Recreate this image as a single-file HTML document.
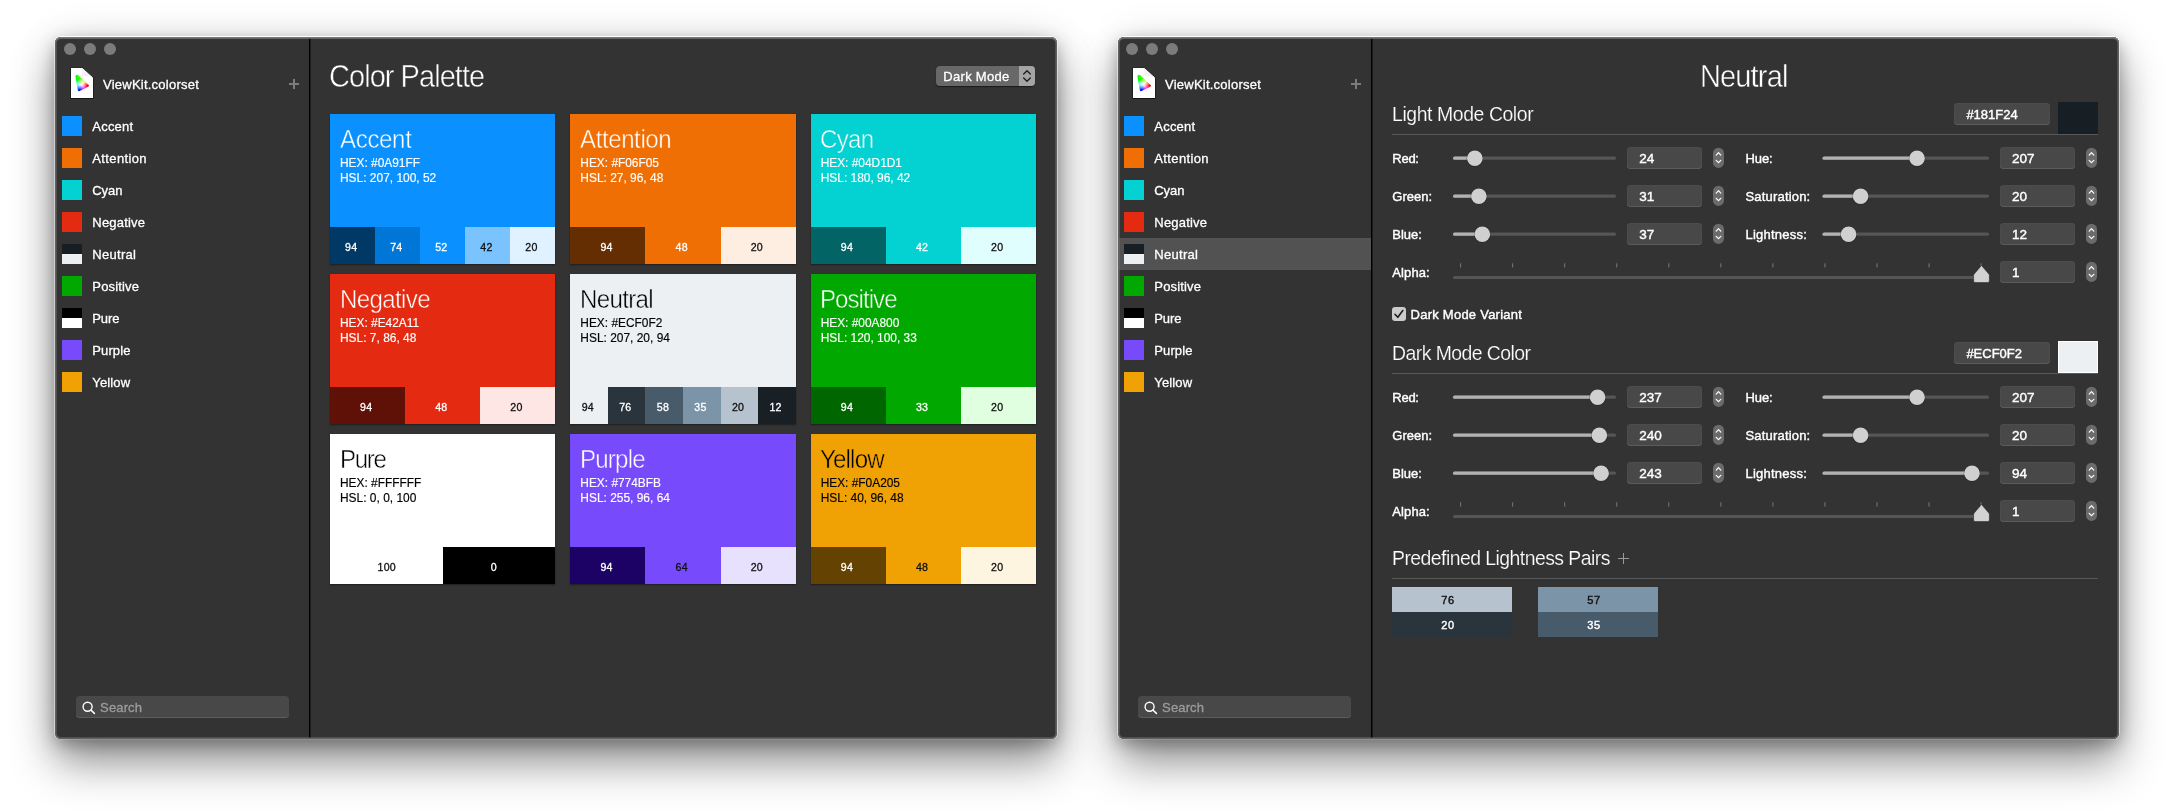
<!DOCTYPE html>
<html lang="en"><head><meta charset="utf-8"><title>ViewKit.colorset</title>
<style>
html,body{margin:0;padding:0}
body{width:2174px;height:812px;overflow:hidden;background:#fff;position:relative;font-family:"Liberation Sans",sans-serif;}
.win{position:absolute;top:37px;width:1002px;height:702px;border-radius:6px;background:#333333;
 box-shadow:0 -1px 0 0 rgba(255,255,255,.9),-1px 0 0 0 rgba(255,255,255,.45),1px 0 0 0 rgba(255,255,255,.45),0 1px 0 0 rgba(255,255,255,.13),0 24px 44px rgba(0,0,0,.42),0 5px 16px rgba(0,0,0,.26),0 0 40px rgba(0,0,0,.10);}
.clip{position:absolute;left:0;top:0;right:0;bottom:0;border-radius:6px;overflow:hidden}
.in{position:absolute;top:-37px;width:2174px;height:812px;will-change:transform}
.edge{position:absolute;left:0;top:0;right:0;bottom:0;border-radius:6px;box-shadow:inset 0 1px 0 #777,inset 0 2px 0 rgba(125,125,125,.45),inset 0 0 0 1px #606060,inset 0 0 0 2px rgba(110,110,110,.5);pointer-events:none}
.abs{position:absolute;overflow:visible}
.t{position:absolute;white-space:nowrap;line-height:1;font-size:13px;color:#fff}
.t.thin{-webkit-text-stroke:0.5px #333333;paint-order:fill stroke;}
.t.light2{-webkit-text-stroke:0.2px #333333;paint-order:fill stroke;}
.t{-webkit-text-stroke:0.3px currentColor}
.t.b{-webkit-text-stroke:0.4px currentColor}
.t.d{-webkit-text-stroke:0.15px currentColor}
.tl{position:absolute;width:12px;height:12px;border-radius:50%;background:#7b7b7b}
.search{position:absolute;background:#484848;border-radius:4px;box-shadow:inset 0 -1px 0 #5c5c5c}
.fld{position:absolute;background:#484848;border-radius:4px;box-shadow:inset 0 -1px 0 #5c5c5c, inset 0 0 0 .5px #505050}
.pop{position:absolute;background:#686868;border-radius:4px;overflow:hidden;box-shadow:0 .5px 1px rgba(0,0,0,.5)}
.popr{position:absolute;right:0;top:0;width:16px;height:20px;background:#a4a4a4}
.knob{position:absolute;width:15px;height:15px;border-radius:50%;background:#cfcfcf;box-shadow:0 0 0 .5px rgba(0,0,0,.45),0 1px 1px rgba(0,0,0,.35)}
.gam{position:absolute;left:74px;top:74px;width:16px;height:18px;
 background:radial-gradient(circle at 47% 57%,#fff 0,rgba(255,255,255,.85) 12%,rgba(255,255,255,0) 46%),conic-gradient(from 100deg at 47% 57%,#f00,#f0f 13%,#00f 27%,#0cf 40%,#0ff 47%,#0f0 60%,#5f0 72%,#ff0 84%,#f80 92%,#f00);
 clip-path:polygon(8.750% 13.900%,11.250% 7.200%,18.750% 4.400%,26.900% 7.200%,91.250% 61.100%,94.400% 65.600%,91.250% 70%,35% 94.400%,28.750% 95.600%,24.400% 91.700%);filter:blur(.3px)}
</style></head><body>
<svg width="0" height="0" style="position:absolute"><defs><filter id="fs" x="-20%" y="-20%" width="140%" height="140%"><feGaussianBlur stdDeviation="0.6"/></filter></defs></svg>
<div class="win" style="left:55px"><div class="clip"><div class="in" style="left:-55px">
<div class="tl" style="left:64px;top:43px"></div>
<div class="tl" style="left:84px;top:43px"></div>
<div class="tl" style="left:104px;top:43px"></div>
<svg class="abs" style="left:69px;top:66px" width="27" height="35" viewBox="69 66 27 35">
<path d="M70.500 67.500h12l11 10v21h-23z" fill="#000" opacity=".8" filter="url(#fs)" transform="translate(0,0.3)"/>
<path d="M71 68h11.2l10.8 9.8v20.2h-22z" fill="#fff"/>
<path d="M82.2 68c.6 3.5-.2 6.500-1.200 8.300 2.800-1.100 7.600-.500 12 1.500z" fill="#f3f3f3"/>
</svg>
<div class="gam"></div>
<span class="t" style="left:103.00px;top:78.00px;font-size:13px;color:#fff;letter-spacing:0.235px;">ViewKit.colorset</span>
<div style="position:absolute;left:289px;top:83px;width:10px;height:2px;background:#7c7c7c;"></div>
<div style="position:absolute;left:293px;top:79px;width:2px;height:10px;background:#7c7c7c;"></div>
<div style="position:absolute;left:62px;top:116px;width:20px;height:20px;background:#0A91FF;"></div>
<span class="t" style="left:92.30px;top:120.00px;font-size:13px;color:#fff;letter-spacing:0.210px;">Accent</span>
<div style="position:absolute;left:62px;top:148px;width:20px;height:20px;background:#F06F05;"></div>
<span class="t" style="left:92.30px;top:152.00px;font-size:13px;color:#fff;letter-spacing:0.365px;">Attention</span>
<div style="position:absolute;left:62px;top:180px;width:20px;height:20px;background:#04D1D1;"></div>
<span class="t" style="left:92.30px;top:184.00px;font-size:13px;color:#fff;letter-spacing:-0.087px;">Cyan</span>
<div style="position:absolute;left:62px;top:212px;width:20px;height:20px;background:#E42A11;"></div>
<span class="t" style="left:92.30px;top:216.00px;font-size:13px;color:#fff;letter-spacing:0.199px;">Negative</span>
<div style="position:absolute;left:62px;top:244px;width:20px;height:10px;background:#181F24;"></div>
<div style="position:absolute;left:62px;top:254px;width:20px;height:10px;background:#ECF0F2;"></div>
<span class="t" style="left:92.30px;top:248.00px;font-size:13px;color:#fff;letter-spacing:0.285px;">Neutral</span>
<div style="position:absolute;left:62px;top:276px;width:20px;height:20px;background:#00A800;"></div>
<span class="t" style="left:92.30px;top:280.00px;font-size:13px;color:#fff;letter-spacing:0.160px;">Positive</span>
<div style="position:absolute;left:62px;top:308px;width:20px;height:10px;background:#000000;"></div>
<div style="position:absolute;left:62px;top:318px;width:20px;height:10px;background:#FFFFFF;"></div>
<span class="t" style="left:92.30px;top:312.00px;font-size:13px;color:#fff;letter-spacing:-0.115px;">Pure</span>
<div style="position:absolute;left:62px;top:340px;width:20px;height:20px;background:#774BFB;"></div>
<span class="t" style="left:92.30px;top:344.00px;font-size:13px;color:#fff;letter-spacing:0.104px;">Purple</span>
<div style="position:absolute;left:62px;top:372px;width:20px;height:20px;background:#F0A205;"></div>
<span class="t" style="left:92.30px;top:376.00px;font-size:13px;color:#fff;letter-spacing:0.133px;">Yellow</span>
<div class="search" style="left:76px;top:696px;width:213px;height:22px"></div>
<svg class="abs" style="left:80px;top:699px" width="17" height="17" viewBox="80 699 17 17"><circle cx="87.6" cy="706.7" r="4.5" fill="none" stroke="#fff" stroke-width="1.4"/><path d="M90.900 710l3.500 3.400" stroke="#fff" stroke-width="1.5" stroke-linecap="round"/></svg>
<span class="t" style="left:100.10px;top:701.00px;font-size:13px;color:#9c9c9c;letter-spacing:0.135px;">Search</span>
<div style="position:absolute;left:309px;top:38px;width:1px;height:700px;background:#000;"></div>
<div style="position:absolute;left:310px;top:38px;width:1px;height:700px;background:rgba(0,0,0,.45);"></div>
<span class="t thin" style="left:329.00px;top:60.00px;font-size:32px;color:#fff;letter-spacing:-1.038px;transform:scaleX(0.9050);transform-origin:0 0;">Color Palette</span>
<div class="pop" style="left:936px;top:66px;width:99px;height:20px"><div class="popr"></div></div>
<svg class="abs" style="left:1019px;top:66px" width="16" height="20" viewBox="0 0 16 20"><path d="M4.700 8l3.300-3.300 3.300 3.300M4.700 12l3.300 3.300 3.300-3.300" fill="none" stroke="#1e1e1e" stroke-width="1.4" stroke-linecap="round" stroke-linejoin="round"/></svg>
<span class="t" style="left:943.30px;top:70.00px;font-size:13px;color:#fff;letter-spacing:0.302px;">Dark Mode</span>
<div style="position:absolute;left:330px;top:114px;width:225.33px;height:150px;background:#0A91FF;box-shadow:0 1px 1.5px rgba(0,0,0,.45);"></div>
<div style="position:absolute;left:330px;top:226.5px;width:45.086px;height:37.5px;background:#003866;"></div>
<span class="t" style="left:345.10px;top:242.00px;font-size:10.6px;color:#fff;letter-spacing:0.236px;">94</span>
<div style="position:absolute;left:375.066px;top:226.5px;width:45.086px;height:37.5px;background:#0076d6;"></div>
<span class="t" style="left:390.17px;top:242.00px;font-size:10.6px;color:#fff;letter-spacing:0.236px;">74</span>
<div style="position:absolute;left:420.132px;top:226.5px;width:45.086px;height:37.5px;background:#0A91FF;"></div>
<span class="t" style="left:435.23px;top:242.00px;font-size:10.6px;color:#fff;letter-spacing:0.236px;">52</span>
<div style="position:absolute;left:465.198px;top:226.5px;width:45.086px;height:37.5px;background:#7ac3ff;"></div>
<span class="t" style="left:480.30px;top:242.00px;font-size:10.6px;color:#111;letter-spacing:0.236px;">42</span>
<div style="position:absolute;left:510.264px;top:226.5px;width:45.086px;height:37.5px;background:#e0f1ff;"></div>
<span class="t" style="left:525.37px;top:242.00px;font-size:10.6px;color:#111;letter-spacing:0.236px;">20</span>
<span class="t light" style="left:339.60px;top:126.00px;font-size:26.2px;color:#fff;letter-spacing:-0.397px;-webkit-text-stroke:0.5px #0A91FF;paint-order:fill stroke;transform:scaleX(0.9200);transform-origin:0 0;">Accent</span>
<span class="t d" style="left:340.00px;top:158.00px;font-size:11.9px;color:#fff;">HEX: #0A91FF</span>
<span class="t d" style="left:340.00px;top:173.00px;font-size:11.95px;color:#fff;">HSL: 207, 100, 52</span>
<div style="position:absolute;left:570.33px;top:114px;width:225.33px;height:150px;background:#F06F05;box-shadow:0 1px 1.5px rgba(0,0,0,.45);"></div>
<div style="position:absolute;left:570.33px;top:226.5px;width:75.13px;height:37.5px;background:#642e02;"></div>
<span class="t" style="left:600.45px;top:242.00px;font-size:10.6px;color:#fff;letter-spacing:0.236px;">94</span>
<div style="position:absolute;left:645.44px;top:226.5px;width:75.13px;height:37.5px;background:#F06F05;"></div>
<span class="t" style="left:675.56px;top:242.00px;font-size:10.6px;color:#fff;letter-spacing:0.236px;">48</span>
<div style="position:absolute;left:720.55px;top:226.5px;width:75.13px;height:37.5px;background:#feeee1;"></div>
<span class="t" style="left:750.67px;top:242.00px;font-size:10.6px;color:#111;letter-spacing:0.236px;">20</span>
<span class="t light" style="left:579.93px;top:126.00px;font-size:26.2px;color:#fff;letter-spacing:-0.464px;-webkit-text-stroke:0.5px #F06F05;paint-order:fill stroke;transform:scaleX(0.9200);transform-origin:0 0;">Attention</span>
<span class="t d" style="left:580.33px;top:158.00px;font-size:11.9px;color:#fff;">HEX: #F06F05</span>
<span class="t d" style="left:580.33px;top:173.00px;font-size:11.95px;color:#fff;">HSL: 27, 96, 48</span>
<div style="position:absolute;left:810.67px;top:114px;width:225.33px;height:150px;background:#04D1D1;box-shadow:0 1px 1.5px rgba(0,0,0,.45);"></div>
<div style="position:absolute;left:810.67px;top:226.5px;width:75.13px;height:37.5px;background:#026464;"></div>
<span class="t" style="left:840.79px;top:242.00px;font-size:10.6px;color:#fff;letter-spacing:0.236px;">94</span>
<div style="position:absolute;left:885.78px;top:226.5px;width:75.13px;height:37.5px;background:#04D1D1;"></div>
<span class="t" style="left:915.90px;top:242.00px;font-size:10.6px;color:#fff;letter-spacing:0.236px;">42</span>
<div style="position:absolute;left:960.89px;top:226.5px;width:75.13px;height:37.5px;background:#e1fefe;"></div>
<span class="t" style="left:991.01px;top:242.00px;font-size:10.6px;color:#111;letter-spacing:0.236px;">20</span>
<span class="t light" style="left:820.27px;top:126.00px;font-size:26.2px;color:#fff;letter-spacing:-0.780px;-webkit-text-stroke:0.5px #04D1D1;paint-order:fill stroke;transform:scaleX(0.9200);transform-origin:0 0;">Cyan</span>
<span class="t d" style="left:820.67px;top:158.00px;font-size:11.9px;color:#fff;">HEX: #04D1D1</span>
<span class="t d" style="left:820.67px;top:173.00px;font-size:11.95px;color:#fff;">HSL: 180, 96, 42</span>
<div style="position:absolute;left:330px;top:274px;width:225.33px;height:150px;background:#E42A11;box-shadow:0 1px 1.5px rgba(0,0,0,.45);"></div>
<div style="position:absolute;left:330px;top:386.5px;width:75.13px;height:37.5px;background:#5f1107;"></div>
<span class="t" style="left:360.12px;top:402.00px;font-size:10.6px;color:#fff;letter-spacing:0.236px;">94</span>
<div style="position:absolute;left:405.11px;top:386.5px;width:75.13px;height:37.5px;background:#E42A11;"></div>
<span class="t" style="left:435.23px;top:402.00px;font-size:10.6px;color:#fff;letter-spacing:0.236px;">48</span>
<div style="position:absolute;left:480.22px;top:386.5px;width:75.13px;height:37.5px;background:#fde6e3;"></div>
<span class="t" style="left:510.34px;top:402.00px;font-size:10.6px;color:#111;letter-spacing:0.236px;">20</span>
<span class="t light" style="left:339.60px;top:286.00px;font-size:26.2px;color:#fff;letter-spacing:-0.697px;-webkit-text-stroke:0.5px #E42A11;paint-order:fill stroke;transform:scaleX(0.9200);transform-origin:0 0;">Negative</span>
<span class="t d" style="left:340.00px;top:318.00px;font-size:11.9px;color:#fff;">HEX: #E42A11</span>
<span class="t d" style="left:340.00px;top:333.00px;font-size:11.95px;color:#fff;">HSL: 7, 86, 48</span>
<div style="position:absolute;left:570.33px;top:274px;width:225.33px;height:150px;background:#ECF0F2;box-shadow:0 1px 1.5px rgba(0,0,0,.45);"></div>
<div style="position:absolute;left:570.33px;top:386.5px;width:37.575px;height:37.5px;background:#ECF0F2;"></div>
<span class="t" style="left:581.68px;top:402.00px;font-size:10.6px;color:#111;letter-spacing:0.236px;">94</span>
<div style="position:absolute;left:607.885px;top:386.5px;width:37.575px;height:37.5px;background:#29343d;"></div>
<span class="t" style="left:619.23px;top:402.00px;font-size:10.6px;color:#fff;letter-spacing:0.236px;">76</span>
<div style="position:absolute;left:645.44px;top:386.5px;width:37.575px;height:37.5px;background:#475b6b;"></div>
<span class="t" style="left:656.79px;top:402.00px;font-size:10.6px;color:#fff;letter-spacing:0.236px;">58</span>
<div style="position:absolute;left:682.995px;top:386.5px;width:37.575px;height:37.5px;background:#7b94a7;"></div>
<span class="t" style="left:694.34px;top:402.00px;font-size:10.6px;color:#fff;letter-spacing:0.236px;">35</span>
<div style="position:absolute;left:720.55px;top:386.5px;width:37.575px;height:37.5px;background:#b6c3ce;"></div>
<span class="t" style="left:731.90px;top:402.00px;font-size:10.6px;color:#111;letter-spacing:0.236px;">20</span>
<div style="position:absolute;left:758.105px;top:386.5px;width:37.575px;height:37.5px;background:#181f25;"></div>
<span class="t" style="left:769.45px;top:402.00px;font-size:10.6px;color:#fff;letter-spacing:0.236px;">12</span>
<span class="t light" style="left:579.93px;top:286.00px;font-size:26.2px;color:#000;letter-spacing:-0.746px;-webkit-text-stroke:0.5px #ECF0F2;paint-order:fill stroke;transform:scaleX(0.9200);transform-origin:0 0;">Neutral</span>
<span class="t d" style="left:580.33px;top:318.00px;font-size:11.9px;color:#000;">HEX: #ECF0F2</span>
<span class="t d" style="left:580.33px;top:333.00px;font-size:11.95px;color:#000;">HSL: 207, 20, 94</span>
<div style="position:absolute;left:810.67px;top:274px;width:225.33px;height:150px;background:#00A800;box-shadow:0 1px 1.5px rgba(0,0,0,.45);"></div>
<div style="position:absolute;left:810.67px;top:386.5px;width:75.13px;height:37.5px;background:#006600;"></div>
<span class="t" style="left:840.79px;top:402.00px;font-size:10.6px;color:#fff;letter-spacing:0.236px;">94</span>
<div style="position:absolute;left:885.78px;top:386.5px;width:75.13px;height:37.5px;background:#00A800;"></div>
<span class="t" style="left:915.90px;top:402.00px;font-size:10.6px;color:#fff;letter-spacing:0.236px;">33</span>
<div style="position:absolute;left:960.89px;top:386.5px;width:75.13px;height:37.5px;background:#e0ffe0;"></div>
<span class="t" style="left:991.01px;top:402.00px;font-size:10.6px;color:#111;letter-spacing:0.236px;">20</span>
<span class="t light" style="left:820.27px;top:286.00px;font-size:26.2px;color:#fff;letter-spacing:-1.060px;-webkit-text-stroke:0.5px #00A800;paint-order:fill stroke;transform:scaleX(0.9200);transform-origin:0 0;">Positive</span>
<span class="t d" style="left:820.67px;top:318.00px;font-size:11.9px;color:#fff;">HEX: #00A800</span>
<span class="t d" style="left:820.67px;top:333.00px;font-size:11.95px;color:#fff;">HSL: 120, 100, 33</span>
<div style="position:absolute;left:330px;top:434px;width:225.33px;height:150px;background:#FFFFFF;box-shadow:0 1px 1.5px rgba(0,0,0,.45);"></div>
<div style="position:absolute;left:330px;top:546.5px;width:112.685px;height:37.5px;background:#fff;"></div>
<span class="t" style="left:377.54px;top:562.00px;font-size:10.6px;color:#111;letter-spacing:0.236px;">100</span>
<div style="position:absolute;left:442.665px;top:546.5px;width:112.685px;height:37.5px;background:#000;"></div>
<span class="t" style="left:490.63px;top:562.00px;font-size:10.6px;color:#fff;letter-spacing:0.236px;">0</span>
<span class="t light" style="left:339.60px;top:446.00px;font-size:26.2px;color:#000;letter-spacing:-1.417px;-webkit-text-stroke:0.5px #FFFFFF;paint-order:fill stroke;transform:scaleX(0.9200);transform-origin:0 0;">Pure</span>
<span class="t d" style="left:340.00px;top:478.00px;font-size:11.9px;color:#000;">HEX: #FFFFFF</span>
<span class="t d" style="left:340.00px;top:493.00px;font-size:11.95px;color:#000;">HSL: 0, 0, 100</span>
<div style="position:absolute;left:570.33px;top:434px;width:225.33px;height:150px;background:#774BFB;box-shadow:0 1px 1.5px rgba(0,0,0,.45);"></div>
<div style="position:absolute;left:570.33px;top:546.5px;width:75.13px;height:37.5px;background:#1b0264;"></div>
<span class="t" style="left:600.45px;top:562.00px;font-size:10.6px;color:#fff;letter-spacing:0.236px;">94</span>
<div style="position:absolute;left:645.44px;top:546.5px;width:75.13px;height:37.5px;background:#774BFB;"></div>
<span class="t" style="left:675.56px;top:562.00px;font-size:10.6px;color:#111;letter-spacing:0.236px;">64</span>
<div style="position:absolute;left:720.55px;top:546.5px;width:75.13px;height:37.5px;background:#e8e1fe;"></div>
<span class="t" style="left:750.67px;top:562.00px;font-size:10.6px;color:#111;letter-spacing:0.236px;">20</span>
<span class="t light" style="left:579.93px;top:446.00px;font-size:26.2px;color:#fff;letter-spacing:-0.883px;-webkit-text-stroke:0.5px #774BFB;paint-order:fill stroke;transform:scaleX(0.9200);transform-origin:0 0;">Purple</span>
<span class="t d" style="left:580.33px;top:478.00px;font-size:11.9px;color:#fff;">HEX: #774BFB</span>
<span class="t d" style="left:580.33px;top:493.00px;font-size:11.95px;color:#fff;">HSL: 255, 96, 64</span>
<div style="position:absolute;left:810.67px;top:434px;width:225.33px;height:150px;background:#F0A205;box-shadow:0 1px 1.5px rgba(0,0,0,.45);"></div>
<div style="position:absolute;left:810.67px;top:546.5px;width:75.13px;height:37.5px;background:#644302;"></div>
<span class="t" style="left:840.79px;top:562.00px;font-size:10.6px;color:#fff;letter-spacing:0.236px;">94</span>
<div style="position:absolute;left:885.78px;top:546.5px;width:75.13px;height:37.5px;background:#F0A205;"></div>
<span class="t" style="left:915.90px;top:562.00px;font-size:10.6px;color:#111;letter-spacing:0.236px;">48</span>
<div style="position:absolute;left:960.89px;top:546.5px;width:75.13px;height:37.5px;background:#fef5e1;"></div>
<span class="t" style="left:991.01px;top:562.00px;font-size:10.6px;color:#111;letter-spacing:0.236px;">20</span>
<span class="t light" style="left:820.27px;top:446.00px;font-size:26.2px;color:#000;letter-spacing:-0.905px;-webkit-text-stroke:0.5px #F0A205;paint-order:fill stroke;transform:scaleX(0.9200);transform-origin:0 0;">Yellow</span>
<span class="t d" style="left:820.67px;top:478.00px;font-size:11.9px;color:#000;">HEX: #F0A205</span>
<span class="t d" style="left:820.67px;top:493.00px;font-size:11.95px;color:#000;">HSL: 40, 96, 48</span>
</div></div><div class="edge"></div></div>
<div class="win" style="left:1118px;width:1001px"><div class="clip">
<div class="in" style="left:-56px">
<div class="tl" style="left:64px;top:43px"></div>
<div class="tl" style="left:84px;top:43px"></div>
<div class="tl" style="left:104px;top:43px"></div>
<svg class="abs" style="left:69px;top:66px" width="27" height="35" viewBox="69 66 27 35">
<path d="M70.500 67.500h12l11 10v21h-23z" fill="#000" opacity=".8" filter="url(#fs)" transform="translate(0,0.3)"/>
<path d="M71 68h11.2l10.8 9.8v20.2h-22z" fill="#fff"/>
<path d="M82.2 68c.6 3.5-.2 6.500-1.200 8.300 2.800-1.100 7.600-.500 12 1.500z" fill="#f3f3f3"/>
</svg>
<div class="gam"></div>
<span class="t" style="left:103.00px;top:78.00px;font-size:13px;color:#fff;letter-spacing:0.235px;">ViewKit.colorset</span>
<div style="position:absolute;left:289px;top:83px;width:10px;height:2px;background:#7c7c7c;"></div>
<div style="position:absolute;left:293px;top:79px;width:2px;height:10px;background:#7c7c7c;"></div>
<div style="position:absolute;left:62px;top:116px;width:20px;height:20px;background:#0A91FF;"></div>
<span class="t" style="left:92.30px;top:120.00px;font-size:13px;color:#fff;letter-spacing:0.210px;">Accent</span>
<div style="position:absolute;left:62px;top:148px;width:20px;height:20px;background:#F06F05;"></div>
<span class="t" style="left:92.30px;top:152.00px;font-size:13px;color:#fff;letter-spacing:0.365px;">Attention</span>
<div style="position:absolute;left:62px;top:180px;width:20px;height:20px;background:#04D1D1;"></div>
<span class="t" style="left:92.30px;top:184.00px;font-size:13px;color:#fff;letter-spacing:-0.087px;">Cyan</span>
<div style="position:absolute;left:62px;top:212px;width:20px;height:20px;background:#E42A11;"></div>
<span class="t" style="left:92.30px;top:216.00px;font-size:13px;color:#fff;letter-spacing:0.199px;">Negative</span>
<div style="position:absolute;left:56px;top:238px;width:253px;height:32px;background:#525252;"></div>
<div style="position:absolute;left:62px;top:244px;width:20px;height:10px;background:#181F24;"></div>
<div style="position:absolute;left:62px;top:254px;width:20px;height:10px;background:#ECF0F2;"></div>
<span class="t" style="left:92.30px;top:248.00px;font-size:13px;color:#fff;letter-spacing:0.285px;">Neutral</span>
<div style="position:absolute;left:62px;top:276px;width:20px;height:20px;background:#00A800;"></div>
<span class="t" style="left:92.30px;top:280.00px;font-size:13px;color:#fff;letter-spacing:0.160px;">Positive</span>
<div style="position:absolute;left:62px;top:308px;width:20px;height:10px;background:#000000;"></div>
<div style="position:absolute;left:62px;top:318px;width:20px;height:10px;background:#FFFFFF;"></div>
<span class="t" style="left:92.30px;top:312.00px;font-size:13px;color:#fff;letter-spacing:-0.115px;">Pure</span>
<div style="position:absolute;left:62px;top:340px;width:20px;height:20px;background:#774BFB;"></div>
<span class="t" style="left:92.30px;top:344.00px;font-size:13px;color:#fff;letter-spacing:0.104px;">Purple</span>
<div style="position:absolute;left:62px;top:372px;width:20px;height:20px;background:#F0A205;"></div>
<span class="t" style="left:92.30px;top:376.00px;font-size:13px;color:#fff;letter-spacing:0.133px;">Yellow</span>
<div class="search" style="left:76px;top:696px;width:213px;height:22px"></div>
<svg class="abs" style="left:80px;top:699px" width="17" height="17" viewBox="80 699 17 17"><circle cx="87.6" cy="706.7" r="4.5" fill="none" stroke="#fff" stroke-width="1.4"/><path d="M90.900 710l3.500 3.400" stroke="#fff" stroke-width="1.5" stroke-linecap="round"/></svg>
<span class="t" style="left:100.10px;top:701.00px;font-size:13px;color:#9c9c9c;letter-spacing:0.135px;">Search</span>
<div style="position:absolute;left:309px;top:38px;width:1px;height:700px;background:#000;"></div>
<div style="position:absolute;left:310px;top:38px;width:1px;height:700px;background:rgba(0,0,0,.45);"></div>
</div>
<div class="in" style="left:-1118px">
<span class="t thin" style="left:1700.00px;top:60.00px;font-size:32px;color:#fff;letter-spacing:-0.925px;transform:scaleX(0.9050);transform-origin:0 0;">Neutral</span>
<span class="t light2" style="left:1391.90px;top:103.00px;font-size:21px;color:#fff;letter-spacing:-0.455px;transform:scaleX(0.9250);transform-origin:0 0;">Light Mode Color</span>
<div style="position:absolute;left:1392px;top:134px;width:706px;height:1px;background:#595959;"></div>
<div class="fld" style="left:1954px;top:103px;width:96px;height:22px"></div>
<span class="t b" style="left:1966.40px;top:108.00px;font-size:13px;color:#fff;">#181F24</span>
<div style="position:absolute;left:2058px;top:102px;width:40px;height:32px;background:#181F24;"></div>
<span class="t b" style="left:1392.30px;top:152.00px;font-size:13px;color:#fff;letter-spacing:-0.265px;">Red:</span>
<svg class="abs" style="left:1449px;top:146px" width="173" height="26" viewBox="1449 146 173 26"><rect x="1453.00" y="156.60" width="163.00" height="3.2" rx="1.6" fill="#565656"/><rect x="1453.00" y="156.60" width="21.84" height="3.2" rx="1.6" fill="#b2b2b2"/><circle cx="1474.84" cy="158.50" r="8.3" fill="#1f1f1f" opacity=".55"/><circle cx="1474.84" cy="158.20" r="7.8" fill="#d0d0d0"/></svg>
<div class="fld" style="left:1627px;top:147px;width:75px;height:22px"></div><span class="t b" style="left:1639.30px;top:152.00px;font-size:13.5px;color:#fff;">24</span>
<svg class="abs" style="left:1713px;top:147px" width="11" height="21" viewBox="0 0 11 21"><rect x="0" y="0.7" width="11" height="20.2" rx="5.5" fill="#6b6b6b"/><path d="M3.200 8.100l2.300-2.400 2.300 2.400M3.200 13.300l2.300 2.400 2.300-2.400" fill="none" stroke="#fff" stroke-width="1.2" stroke-linecap="round" stroke-linejoin="round"/></svg>
<span class="t b" style="left:1745.50px;top:152.00px;font-size:13px;color:#fff;letter-spacing:-0.090px;">Hue:</span>
<svg class="abs" style="left:1818px;top:146px" width="176" height="26" viewBox="1818 146 176 26"><rect x="1822.50" y="156.60" width="166.50" height="3.2" rx="1.6" fill="#565656"/><rect x="1822.50" y="156.60" width="94.54" height="3.2" rx="1.6" fill="#b2b2b2"/><circle cx="1917.04" cy="158.50" r="8.3" fill="#1f1f1f" opacity=".55"/><circle cx="1917.04" cy="158.20" r="7.8" fill="#d0d0d0"/></svg>
<div class="fld" style="left:2000px;top:147px;width:75px;height:22px"></div><span class="t b" style="left:2012.00px;top:152.00px;font-size:13.5px;color:#fff;">207</span>
<svg class="abs" style="left:2086px;top:147px" width="11" height="21" viewBox="0 0 11 21"><rect x="0" y="0.7" width="11" height="20.2" rx="5.5" fill="#6b6b6b"/><path d="M3.200 8.100l2.300-2.400 2.300 2.400M3.200 13.300l2.300 2.400 2.300-2.400" fill="none" stroke="#fff" stroke-width="1.2" stroke-linecap="round" stroke-linejoin="round"/></svg>
<span class="t b" style="left:1392.30px;top:190.00px;font-size:13px;color:#fff;letter-spacing:-0.007px;">Green:</span>
<svg class="abs" style="left:1449px;top:184px" width="173" height="26" viewBox="1449 184 173 26"><rect x="1453.00" y="194.60" width="163.00" height="3.2" rx="1.6" fill="#565656"/><rect x="1453.00" y="194.60" width="25.87" height="3.2" rx="1.6" fill="#b2b2b2"/><circle cx="1478.87" cy="196.50" r="8.3" fill="#1f1f1f" opacity=".55"/><circle cx="1478.87" cy="196.20" r="7.8" fill="#d0d0d0"/></svg>
<div class="fld" style="left:1627px;top:185px;width:75px;height:22px"></div><span class="t b" style="left:1639.30px;top:190.00px;font-size:13.5px;color:#fff;">31</span>
<svg class="abs" style="left:1713px;top:185px" width="11" height="21" viewBox="0 0 11 21"><rect x="0" y="0.7" width="11" height="20.2" rx="5.5" fill="#6b6b6b"/><path d="M3.200 8.100l2.300-2.400 2.300 2.400M3.200 13.300l2.300 2.400 2.300-2.400" fill="none" stroke="#fff" stroke-width="1.2" stroke-linecap="round" stroke-linejoin="round"/></svg>
<span class="t b" style="left:1745.50px;top:190.00px;font-size:13px;color:#fff;letter-spacing:0.184px;">Saturation:</span>
<svg class="abs" style="left:1818px;top:184px" width="176" height="26" viewBox="1818 184 176 26"><rect x="1822.50" y="194.60" width="166.50" height="3.2" rx="1.6" fill="#565656"/><rect x="1822.50" y="194.60" width="38.10" height="3.2" rx="1.6" fill="#b2b2b2"/><circle cx="1860.60" cy="196.50" r="8.3" fill="#1f1f1f" opacity=".55"/><circle cx="1860.60" cy="196.20" r="7.8" fill="#d0d0d0"/></svg>
<div class="fld" style="left:2000px;top:185px;width:75px;height:22px"></div><span class="t b" style="left:2012.00px;top:190.00px;font-size:13.5px;color:#fff;">20</span>
<svg class="abs" style="left:2086px;top:185px" width="11" height="21" viewBox="0 0 11 21"><rect x="0" y="0.7" width="11" height="20.2" rx="5.5" fill="#6b6b6b"/><path d="M3.200 8.100l2.300-2.400 2.300 2.400M3.200 13.300l2.300 2.400 2.300-2.400" fill="none" stroke="#fff" stroke-width="1.2" stroke-linecap="round" stroke-linejoin="round"/></svg>
<span class="t b" style="left:1392.30px;top:228.00px;font-size:13px;color:#fff;letter-spacing:-0.006px;">Blue:</span>
<svg class="abs" style="left:1449px;top:222px" width="173" height="26" viewBox="1449 222 173 26"><rect x="1453.00" y="232.60" width="163.00" height="3.2" rx="1.6" fill="#565656"/><rect x="1453.00" y="232.60" width="29.33" height="3.2" rx="1.6" fill="#b2b2b2"/><circle cx="1482.33" cy="234.50" r="8.3" fill="#1f1f1f" opacity=".55"/><circle cx="1482.33" cy="234.20" r="7.8" fill="#d0d0d0"/></svg>
<div class="fld" style="left:1627px;top:223px;width:75px;height:22px"></div><span class="t b" style="left:1639.30px;top:228.00px;font-size:13.5px;color:#fff;">37</span>
<svg class="abs" style="left:1713px;top:223px" width="11" height="21" viewBox="0 0 11 21"><rect x="0" y="0.7" width="11" height="20.2" rx="5.5" fill="#6b6b6b"/><path d="M3.200 8.100l2.300-2.400 2.300 2.400M3.200 13.300l2.300 2.400 2.300-2.400" fill="none" stroke="#fff" stroke-width="1.2" stroke-linecap="round" stroke-linejoin="round"/></svg>
<span class="t b" style="left:1745.50px;top:228.00px;font-size:13px;color:#fff;letter-spacing:0.234px;">Lightness:</span>
<svg class="abs" style="left:1818px;top:222px" width="176" height="26" viewBox="1818 222 176 26"><rect x="1822.50" y="232.60" width="166.50" height="3.2" rx="1.6" fill="#565656"/><rect x="1822.50" y="232.60" width="26.06" height="3.2" rx="1.6" fill="#b2b2b2"/><circle cx="1848.56" cy="234.50" r="8.3" fill="#1f1f1f" opacity=".55"/><circle cx="1848.56" cy="234.20" r="7.8" fill="#d0d0d0"/></svg>
<div class="fld" style="left:2000px;top:223px;width:75px;height:22px"></div><span class="t b" style="left:2012.00px;top:228.00px;font-size:13.5px;color:#fff;">12</span>
<svg class="abs" style="left:2086px;top:223px" width="11" height="21" viewBox="0 0 11 21"><rect x="0" y="0.7" width="11" height="20.2" rx="5.5" fill="#6b6b6b"/><path d="M3.200 8.100l2.300-2.400 2.300 2.400M3.200 13.300l2.300 2.400 2.300-2.400" fill="none" stroke="#fff" stroke-width="1.2" stroke-linecap="round" stroke-linejoin="round"/></svg>
<span class="t b" style="left:1392.30px;top:266.00px;font-size:13px;color:#fff;letter-spacing:0.106px;">Alpha:</span>
<div style="position:absolute;left:1453px;top:276.2px;width:536px;height:3px;background:#555;border-radius:1.5px;"></div>
<svg class="abs" style="left:0;top:0" width="2174" height="812" viewBox="0 0 2174 812"><rect x="1460.10" y="263.30" width="1" height="4.2" fill="#7a7a7a"/><rect x="1512.15" y="263.30" width="1" height="4.2" fill="#7a7a7a"/><rect x="1564.20" y="263.30" width="1" height="4.2" fill="#7a7a7a"/><rect x="1616.25" y="263.30" width="1" height="4.2" fill="#7a7a7a"/><rect x="1668.30" y="263.30" width="1" height="4.2" fill="#7a7a7a"/><rect x="1720.35" y="263.30" width="1" height="4.2" fill="#7a7a7a"/><rect x="1772.40" y="263.30" width="1" height="4.2" fill="#7a7a7a"/><rect x="1824.45" y="263.30" width="1" height="4.2" fill="#7a7a7a"/><rect x="1876.50" y="263.30" width="1" height="4.2" fill="#7a7a7a"/><rect x="1928.55" y="263.30" width="1" height="4.2" fill="#7a7a7a"/><rect x="1980.60" y="263.30" width="1" height="4.2" fill="#7a7a7a"/></svg>
<svg class="abs" style="left:1972px;top:264px" width="19" height="20" viewBox="1972 264 19 20"><path d="M1981.500 265.400l7.300 8.600q.6.700.6 1.600v5.400q0 1.600-1.600 1.600h-12.600q-1.600 0-1.600-1.600v-5.400q0-.900.6-1.600z" fill="#d2d2d2" stroke="#2a2a2a" stroke-width=".6"/></svg>
<div class="fld" style="left:2000px;top:261px;width:75px;height:22px"></div><span class="t b" style="left:2012.00px;top:266.00px;font-size:13.5px;color:#fff;">1</span>
<svg class="abs" style="left:2086px;top:261px" width="11" height="21" viewBox="0 0 11 21"><rect x="0" y="0.7" width="11" height="20.2" rx="5.5" fill="#6b6b6b"/><path d="M3.200 8.100l2.300-2.400 2.300 2.400M3.200 13.300l2.300 2.400 2.300-2.400" fill="none" stroke="#fff" stroke-width="1.2" stroke-linecap="round" stroke-linejoin="round"/></svg>
<svg class="abs" style="left:1391px;top:306px" width="16" height="16" viewBox="0 0 16 16"><rect x="1" y="1" width="14" height="14" rx="3" fill="#cbcbcb"/><path d="M4 8.300l2.800 3 5-6.800" fill="none" stroke="#1c1c1c" stroke-width="1.6" stroke-linecap="round" stroke-linejoin="round"/></svg>
<span class="t b" style="left:1410.60px;top:308.00px;font-size:13px;color:#fff;letter-spacing:0.240px;">Dark Mode Variant</span>
<span class="t light2" style="left:1391.90px;top:342.00px;font-size:21px;color:#fff;letter-spacing:-0.599px;transform:scaleX(0.9250);transform-origin:0 0;">Dark Mode Color</span>
<div style="position:absolute;left:1392px;top:373px;width:706px;height:1px;background:#595959;"></div>
<div class="fld" style="left:1954px;top:342px;width:96px;height:22px"></div>
<span class="t b" style="left:1966.40px;top:347.00px;font-size:13px;color:#fff;">#ECF0F2</span>
<div style="position:absolute;left:2058px;top:341px;width:40px;height:32px;background:#ECF0F2;box-shadow:inset 0 0 0 1px #fff;"></div>
<span class="t b" style="left:1392.30px;top:391.00px;font-size:13px;color:#fff;letter-spacing:-0.265px;">Red:</span>
<svg class="abs" style="left:1449px;top:385px" width="173" height="26" viewBox="1449 385 173 26"><rect x="1453.00" y="395.60" width="163.00" height="3.2" rx="1.6" fill="#565656"/><rect x="1453.00" y="395.60" width="144.62" height="3.2" rx="1.6" fill="#b2b2b2"/><circle cx="1597.62" cy="397.50" r="8.3" fill="#1f1f1f" opacity=".55"/><circle cx="1597.62" cy="397.20" r="7.8" fill="#d0d0d0"/></svg>
<div class="fld" style="left:1627px;top:386px;width:75px;height:22px"></div><span class="t b" style="left:1639.30px;top:391.00px;font-size:13.5px;color:#fff;">237</span>
<svg class="abs" style="left:1713px;top:386px" width="11" height="21" viewBox="0 0 11 21"><rect x="0" y="0.7" width="11" height="20.2" rx="5.5" fill="#6b6b6b"/><path d="M3.200 8.100l2.300-2.400 2.300 2.400M3.200 13.300l2.300 2.400 2.300-2.400" fill="none" stroke="#fff" stroke-width="1.2" stroke-linecap="round" stroke-linejoin="round"/></svg>
<span class="t b" style="left:1745.50px;top:391.00px;font-size:13px;color:#fff;letter-spacing:-0.090px;">Hue:</span>
<svg class="abs" style="left:1818px;top:385px" width="176" height="26" viewBox="1818 385 176 26"><rect x="1822.50" y="395.60" width="166.50" height="3.2" rx="1.6" fill="#565656"/><rect x="1822.50" y="395.60" width="94.54" height="3.2" rx="1.6" fill="#b2b2b2"/><circle cx="1917.04" cy="397.50" r="8.3" fill="#1f1f1f" opacity=".55"/><circle cx="1917.04" cy="397.20" r="7.8" fill="#d0d0d0"/></svg>
<div class="fld" style="left:2000px;top:386px;width:75px;height:22px"></div><span class="t b" style="left:2012.00px;top:391.00px;font-size:13.5px;color:#fff;">207</span>
<svg class="abs" style="left:2086px;top:386px" width="11" height="21" viewBox="0 0 11 21"><rect x="0" y="0.7" width="11" height="20.2" rx="5.5" fill="#6b6b6b"/><path d="M3.200 8.100l2.300-2.400 2.300 2.400M3.200 13.300l2.300 2.400 2.300-2.400" fill="none" stroke="#fff" stroke-width="1.2" stroke-linecap="round" stroke-linejoin="round"/></svg>
<span class="t b" style="left:1392.30px;top:429.00px;font-size:13px;color:#fff;letter-spacing:-0.007px;">Green:</span>
<svg class="abs" style="left:1449px;top:423px" width="173" height="26" viewBox="1449 423 173 26"><rect x="1453.00" y="433.60" width="163.00" height="3.2" rx="1.6" fill="#565656"/><rect x="1453.00" y="433.60" width="146.35" height="3.2" rx="1.6" fill="#b2b2b2"/><circle cx="1599.35" cy="435.50" r="8.3" fill="#1f1f1f" opacity=".55"/><circle cx="1599.35" cy="435.20" r="7.8" fill="#d0d0d0"/></svg>
<div class="fld" style="left:1627px;top:424px;width:75px;height:22px"></div><span class="t b" style="left:1639.30px;top:429.00px;font-size:13.5px;color:#fff;">240</span>
<svg class="abs" style="left:1713px;top:424px" width="11" height="21" viewBox="0 0 11 21"><rect x="0" y="0.7" width="11" height="20.2" rx="5.5" fill="#6b6b6b"/><path d="M3.200 8.100l2.300-2.400 2.300 2.400M3.200 13.300l2.300 2.400 2.300-2.400" fill="none" stroke="#fff" stroke-width="1.2" stroke-linecap="round" stroke-linejoin="round"/></svg>
<span class="t b" style="left:1745.50px;top:429.00px;font-size:13px;color:#fff;letter-spacing:0.184px;">Saturation:</span>
<svg class="abs" style="left:1818px;top:423px" width="176" height="26" viewBox="1818 423 176 26"><rect x="1822.50" y="433.60" width="166.50" height="3.2" rx="1.6" fill="#565656"/><rect x="1822.50" y="433.60" width="38.10" height="3.2" rx="1.6" fill="#b2b2b2"/><circle cx="1860.60" cy="435.50" r="8.3" fill="#1f1f1f" opacity=".55"/><circle cx="1860.60" cy="435.20" r="7.8" fill="#d0d0d0"/></svg>
<div class="fld" style="left:2000px;top:424px;width:75px;height:22px"></div><span class="t b" style="left:2012.00px;top:429.00px;font-size:13.5px;color:#fff;">20</span>
<svg class="abs" style="left:2086px;top:424px" width="11" height="21" viewBox="0 0 11 21"><rect x="0" y="0.7" width="11" height="20.2" rx="5.5" fill="#6b6b6b"/><path d="M3.200 8.100l2.300-2.400 2.300 2.400M3.200 13.300l2.300 2.400 2.300-2.400" fill="none" stroke="#fff" stroke-width="1.2" stroke-linecap="round" stroke-linejoin="round"/></svg>
<span class="t b" style="left:1392.30px;top:467.00px;font-size:13px;color:#fff;letter-spacing:-0.006px;">Blue:</span>
<svg class="abs" style="left:1449px;top:461px" width="173" height="26" viewBox="1449 461 173 26"><rect x="1453.00" y="471.60" width="163.00" height="3.2" rx="1.6" fill="#565656"/><rect x="1453.00" y="471.60" width="148.08" height="3.2" rx="1.6" fill="#b2b2b2"/><circle cx="1601.08" cy="473.50" r="8.3" fill="#1f1f1f" opacity=".55"/><circle cx="1601.08" cy="473.20" r="7.8" fill="#d0d0d0"/></svg>
<div class="fld" style="left:1627px;top:462px;width:75px;height:22px"></div><span class="t b" style="left:1639.30px;top:467.00px;font-size:13.5px;color:#fff;">243</span>
<svg class="abs" style="left:1713px;top:462px" width="11" height="21" viewBox="0 0 11 21"><rect x="0" y="0.7" width="11" height="20.2" rx="5.5" fill="#6b6b6b"/><path d="M3.200 8.100l2.300-2.400 2.300 2.400M3.200 13.300l2.300 2.400 2.300-2.400" fill="none" stroke="#fff" stroke-width="1.2" stroke-linecap="round" stroke-linejoin="round"/></svg>
<span class="t b" style="left:1745.50px;top:467.00px;font-size:13px;color:#fff;letter-spacing:0.234px;">Lightness:</span>
<svg class="abs" style="left:1818px;top:461px" width="176" height="26" viewBox="1818 461 176 26"><rect x="1822.50" y="471.60" width="166.50" height="3.2" rx="1.6" fill="#565656"/><rect x="1822.50" y="471.60" width="149.47" height="3.2" rx="1.6" fill="#b2b2b2"/><circle cx="1971.97" cy="473.50" r="8.3" fill="#1f1f1f" opacity=".55"/><circle cx="1971.97" cy="473.20" r="7.8" fill="#d0d0d0"/></svg>
<div class="fld" style="left:2000px;top:462px;width:75px;height:22px"></div><span class="t b" style="left:2012.00px;top:467.00px;font-size:13.5px;color:#fff;">94</span>
<svg class="abs" style="left:2086px;top:462px" width="11" height="21" viewBox="0 0 11 21"><rect x="0" y="0.7" width="11" height="20.2" rx="5.5" fill="#6b6b6b"/><path d="M3.200 8.100l2.300-2.400 2.300 2.400M3.200 13.300l2.300 2.400 2.300-2.400" fill="none" stroke="#fff" stroke-width="1.2" stroke-linecap="round" stroke-linejoin="round"/></svg>
<span class="t b" style="left:1392.30px;top:505.00px;font-size:13px;color:#fff;letter-spacing:0.106px;">Alpha:</span>
<div style="position:absolute;left:1453px;top:515.2px;width:536px;height:3px;background:#555;border-radius:1.5px;"></div>
<svg class="abs" style="left:0;top:0" width="2174" height="812" viewBox="0 0 2174 812"><rect x="1460.10" y="502.30" width="1" height="4.2" fill="#7a7a7a"/><rect x="1512.15" y="502.30" width="1" height="4.2" fill="#7a7a7a"/><rect x="1564.20" y="502.30" width="1" height="4.2" fill="#7a7a7a"/><rect x="1616.25" y="502.30" width="1" height="4.2" fill="#7a7a7a"/><rect x="1668.30" y="502.30" width="1" height="4.2" fill="#7a7a7a"/><rect x="1720.35" y="502.30" width="1" height="4.2" fill="#7a7a7a"/><rect x="1772.40" y="502.30" width="1" height="4.2" fill="#7a7a7a"/><rect x="1824.45" y="502.30" width="1" height="4.2" fill="#7a7a7a"/><rect x="1876.50" y="502.30" width="1" height="4.2" fill="#7a7a7a"/><rect x="1928.55" y="502.30" width="1" height="4.2" fill="#7a7a7a"/><rect x="1980.60" y="502.30" width="1" height="4.2" fill="#7a7a7a"/></svg>
<svg class="abs" style="left:1972px;top:503px" width="19" height="20" viewBox="1972 264 19 20"><path d="M1981.500 265.400l7.300 8.600q.6.700.6 1.600v5.400q0 1.600-1.600 1.600h-12.600q-1.600 0-1.600-1.600v-5.400q0-.900.6-1.600z" fill="#d2d2d2" stroke="#2a2a2a" stroke-width=".6"/></svg>
<div class="fld" style="left:2000px;top:500px;width:75px;height:22px"></div><span class="t b" style="left:2012.00px;top:505.00px;font-size:13.5px;color:#fff;">1</span>
<svg class="abs" style="left:2086px;top:500px" width="11" height="21" viewBox="0 0 11 21"><rect x="0" y="0.7" width="11" height="20.2" rx="5.5" fill="#6b6b6b"/><path d="M3.200 8.100l2.300-2.400 2.300 2.400M3.200 13.300l2.300 2.400 2.300-2.400" fill="none" stroke="#fff" stroke-width="1.2" stroke-linecap="round" stroke-linejoin="round"/></svg>
<span class="t light2" style="left:1391.90px;top:547.00px;font-size:21px;color:#fff;letter-spacing:-0.597px;transform:scaleX(0.9250);transform-origin:0 0;">Predefined Lightness Pairs</span>
<div style="position:absolute;left:1618px;top:557.5px;width:11px;height:1.6px;background:#9a9a9a;"></div>
<div style="position:absolute;left:1622.7px;top:552.8px;width:1.6px;height:11px;background:#9a9a9a;"></div>
<div style="position:absolute;left:1392px;top:578px;width:706px;height:1px;background:#595959;"></div>
<div style="position:absolute;left:1392px;top:587px;width:120px;height:25px;background:#b6c3ce;"></div>
<span class="t b" style="left:1441.27px;top:595.00px;font-size:11px;color:#111;letter-spacing:0.612px;">76</span>
<div style="position:absolute;left:1392px;top:612px;width:120px;height:25px;background:#29343d;"></div>
<span class="t b" style="left:1441.27px;top:620.00px;font-size:11px;color:#fff;letter-spacing:0.612px;">20</span>
<div style="position:absolute;left:1538px;top:587px;width:120px;height:25px;background:#7b94a7;"></div>
<span class="t b" style="left:1587.27px;top:595.00px;font-size:11px;color:#111;letter-spacing:0.612px;">57</span>
<div style="position:absolute;left:1538px;top:612px;width:120px;height:25px;background:#475b6b;"></div>
<span class="t b" style="left:1587.27px;top:620.00px;font-size:11px;color:#fff;letter-spacing:0.612px;">35</span>
</div>
</div><div class="edge"></div></div>
</body></html>
